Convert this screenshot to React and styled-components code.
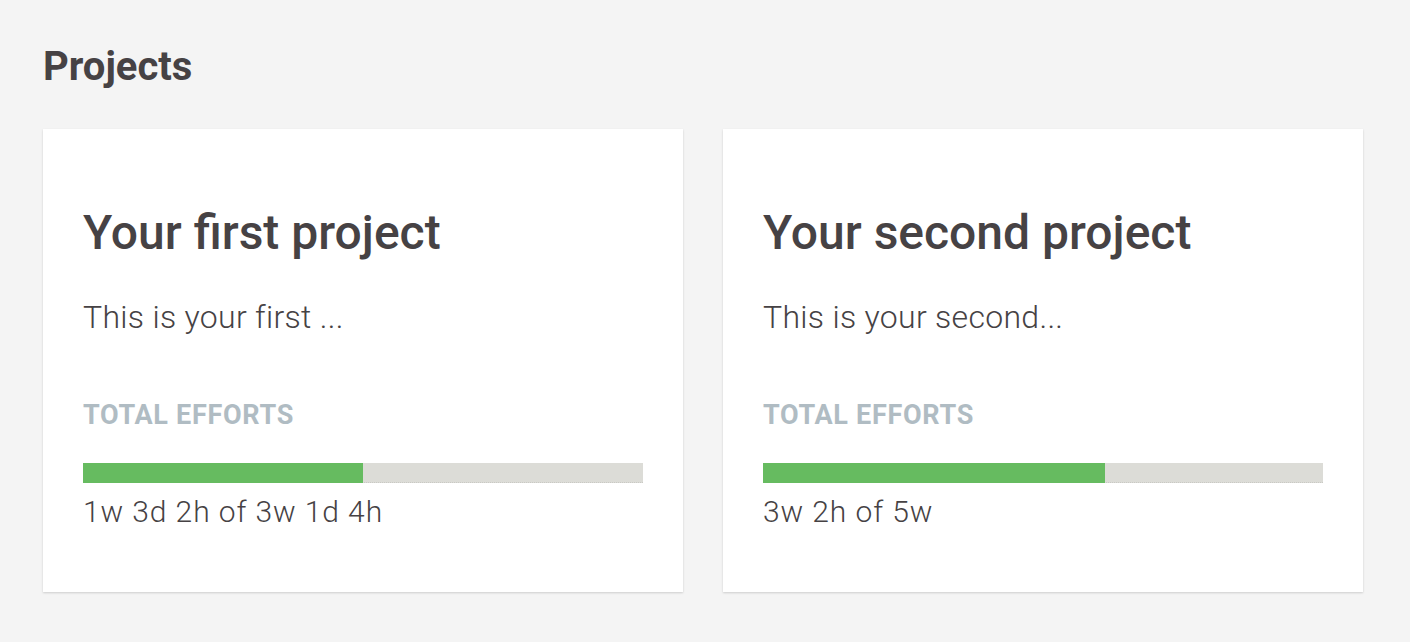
import React from "react";
import styled, { createGlobalStyle } from "styled-components";

const projects = [
  {
    title: "Your first project",
    description: "This is your first ...",
    spent: "1w 3d 2h",
    total: "3w 1d 4h",
    progress: 50,
  },
  {
    title: "Your second project",
    description: "This is your second...",
    spent: "3w 2h",
    total: "5w",
    progress: 61,
  },
];

const App = () => {
  return (
    <>
      <GlobalStyle />
      <Page>
        <PageTitle>Projects</PageTitle>
        <CardGrid>
          {projects.map((p) => (
            <Card key={p.title}>
              <CardTitle>{p.title}</CardTitle>
              <Description>{p.description}</Description>
              <Label>Total efforts</Label>
              <Track>
                <Fill style={{ width: `${p.progress}%` }} />
              </Track>
              <Stats>
                {p.spent} of {p.total}
              </Stats>
            </Card>
          ))}
        </CardGrid>
      </Page>
    </>
  );
};

export default App;

const GlobalStyle = createGlobalStyle`
  html, body {
    margin: 0;
    padding: 0;
    background: #f4f4f4;
  }
  body {
    font-family: Roboto, "Liberation Sans", sans-serif;
    color: #464244;
  }
`;

const Page = styled.div`
  padding: 46px 0 40px 43px;
`;

const PageTitle = styled.h1`
  margin: 0 0 41px;
  font-size: 40px;
  line-height: 42px;
  font-weight: 700;
  color: #464244;
`;

const CardGrid = styled.div`
  display: grid;
  grid-template-columns: 640px 640px;
  gap: 40px;
`;

const Card = styled.div`
  background: #ffffff;
  padding: 76px 40px 64px;
  box-shadow: 0 1px 2px rgba(0, 0, 0, 0.16);
`;

const CardTitle = styled.h2`
  margin: 0;
  font-size: 48px;
  line-height: 56px;
  font-weight: 500;
  color: #464244;
`;

const Description = styled.p`
  margin: 38px 0 0;
  font-size: 32px;
  line-height: 36px;
  font-weight: 300;
  letter-spacing: 0.3px;
`;

const Label = styled.div`
  margin-top: 66px;
  font-size: 27px;
  line-height: 28px;
  font-weight: 700;
  letter-spacing: 0.7px;
  text-transform: uppercase;
  color: #b0bcc3;
`;

const Track = styled.div`
  margin-top: 34px;
  height: 20px;
  background: #dcdcd7;
  border-bottom: 1px dotted #c9c9c4;
  box-sizing: border-box;
`;

const Fill = styled.div`
  height: 20px;
  background: #66bb60;
`;

const Stats = styled.div`
  margin-top: 13px;
  font-size: 30px;
  line-height: 32px;
  font-weight: 300;
  letter-spacing: 0.9px;
`;
